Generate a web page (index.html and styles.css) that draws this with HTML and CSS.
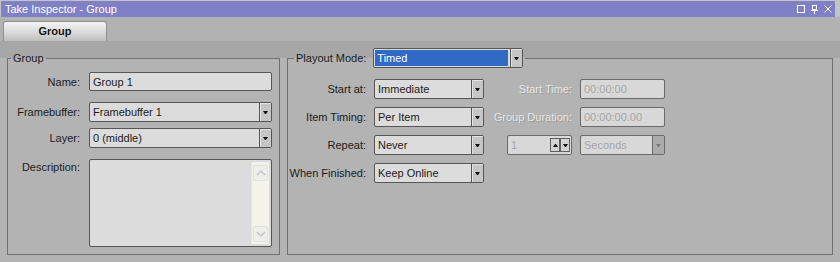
FILE: index.html
```html
<!DOCTYPE html>
<html lang="en">
<head>
    <meta charset="UTF-8">
    <meta name="viewport" content="width=device-width, initial-scale=1.0">
    <title>Take Inspector - Group</title>
    <link rel="stylesheet" href="styles.css">
</head>
<body>

    <div class="window">
        <div class="titlebar">
            <span class="title">Take Inspector - Group</span>
            <div class="title-buttons">
                <svg width="8" height="8" viewBox="0 0 8 8"><rect x="0.5" y="0.5" width="7" height="7" fill="none" stroke="#fff"/></svg>
                <svg width="7" height="9" viewBox="0 0 7 9"><rect x="1.5" y="0.5" width="4" height="4" fill="none" stroke="#fff"/><line x1="0" y1="5.5" x2="7" y2="5.5" stroke="#fff"/><line x1="3.5" y1="5" x2="3.5" y2="9" stroke="#fff"/></svg>
                <svg width="8" height="8" viewBox="0 0 8 8"><path d="M0.5 0.5 L7.5 7.5 M7.5 0.5 L0.5 7.5" stroke="#fff" stroke-width="1" fill="none"/></svg>
            </div>
        </div>

        <div class="tabstrip">
            <div class="tab">Group</div>
        </div>

        <div class="content">
            <!-- left: group properties -->
            <fieldset class="box group-box">
                <legend class="legend-group">Group</legend>
                <div class="group-form">
                    <div class="row row-name">
                        <span class="lbl">Name:</span>
                        <div class="field">Group 1</div>
                    </div>
                    <div class="row row-fb">
                        <span class="lbl">Framebuffer:</span>
                        <div class="combo"><span class="value">Framebuffer 1</span><span class="drop"></span></div>
                    </div>
                    <div class="row row-layer">
                        <span class="lbl">Layer:</span>
                        <div class="combo"><span class="value">0 (middle)</span><span class="drop"></span></div>
                    </div>
                    <div class="row row-desc">
                        <span class="lbl lbl-top">Description:</span>
                        <div class="memo">
                            <div class="scrollbar">
                                <span class="sbtn"><svg width="10" height="6" viewBox="0 0 10 6"><polyline points="1,5 5,1 9,5" fill="none" stroke="#c4c4c4" stroke-width="1.5"/></svg></span>
                                <span class="sbtn"><svg width="10" height="6" viewBox="0 0 10 6"><polyline points="1,1 5,5 9,1" fill="none" stroke="#c4c4c4" stroke-width="1.5"/></svg></span>
                            </div>
                        </div>
                    </div>
                </div>
            </fieldset>

            <!-- right: playout settings -->
            <fieldset class="box playout-box">
                <legend class="legend-playout">
                    <span>Playout Mode:</span>
                    <div class="combo combo-timed"><span class="value"><span class="selected">Timed</span></span><span class="drop"></span></div>
                </legend>
                <div class="playout-grid">
                    <span class="lbl">Start at:</span>
                    <div class="combo"><span class="value">Immediate</span><span class="drop"></span></div>
                    <span class="lbl disabled">Start Time:</span>
                    <div class="field is-disabled">00:00:00</div>

                    <span class="lbl">Item Timing:</span>
                    <div class="combo"><span class="value">Per Item</span><span class="drop"></span></div>
                    <span class="lbl disabled">Group Duration:</span>
                    <div class="field is-disabled">00:00:00.00</div>

                    <span class="lbl">Repeat:</span>
                    <div class="combo"><span class="value">Never</span><span class="drop"></span></div>
                    <div class="spin">
                        <span class="value">1</span>
                        <span class="spin-btn up"></span>
                        <span class="spin-btn down"></span>
                    </div>
                    <div class="combo is-disabled"><span class="value">Seconds</span><span class="drop"></span></div>

                    <span class="lbl">When Finished:</span>
                    <div class="combo"><span class="value">Keep Online</span><span class="drop"></span></div>
                </div>
            </fieldset>
        </div>
    </div>

</body>
</html>
```

FILE: styles.css
```css
body {
    margin: 0;
    background-color: #c4c4c4;
    font-family: "Liberation Sans", Arial, sans-serif;
    font-size: 11px;
    color: #1b1b1b;
}

.window {
    width: 840px;
    height: 262px;
    display: flex;
    flex-direction: column;
    overflow: hidden;
}

/* title bar */
.titlebar {
    height: 16px;
    margin: 1px 5px 0 1px;
    padding: 0 3px 0 4px;
    background-color: #7f80c5;
    color: #ffffff;
    display: flex;
    align-items: center;
    justify-content: space-between;
}

.title {
    font-size: 11px;
    line-height: 16px;
}

.title-buttons {
    display: flex;
    align-items: center;
    gap: 6px;
}

.title-buttons svg {
    display: block;
}

/* tabs */
.tabstrip {
    height: 24px;
    background-color: #b2b2b2;
    display: flex;
    align-items: flex-end;
    padding-left: 3px;
    box-sizing: border-box;
}

.tab {
    width: 104px;
    height: 20px;
    box-sizing: border-box;
    border: 1px solid #8f8f8f;
    border-bottom: none;
    border-radius: 3px 3px 0 0;
    background: linear-gradient(to bottom, #f4f4f4, #dadada 55%, #bebebe);
    font-weight: bold;
    text-align: center;
    line-height: 19px;
    color: #141414;
}

/* main area */
.content {
    flex: 1;
    display: flex;
    gap: 7px;
    padding: 7px 7px 7px 7px;
    background: linear-gradient(to bottom, #a7a7a7 0, #a7a7a7 17px, #b3b3b3 17px);
}

.box {
    margin: 0;
    padding: 0;
    border: 1px solid #707070;
    min-width: 0;
    box-sizing: border-box;
}

.group-box {
    width: 273px;
}

.playout-box {
    width: 546px;
}

legend {
    height: 20px;
    display: flex;
    align-items: center;
    box-sizing: border-box;
}

.legend-group {
    margin-left: 3px;
    padding: 0 2px 0 2px;
}

.legend-playout {
    margin-left: 6px;
    padding: 0 2px;
    gap: 7px;
}

/* left form */
.group-form {
    padding: 4px 7px 7px 0;
}

.row {
    display: flex;
    align-items: center;
    gap: 9px;
}

.row .lbl {
    width: 72px;
    flex-shrink: 0;
}

.row-name {
    height: 19px;
}

.row-fb {
    height: 20px;
    margin-top: 11px;
}

.row-layer {
    height: 20px;
    margin-top: 6px;
}

.row-desc {
    height: 88px;
    margin-top: 11px;
    align-items: flex-start;
}

.lbl {
    display: flex;
    align-items: center;
    justify-content: flex-end;
    white-space: nowrap;
}

.lbl-top {
    padding-top: 2px;
    line-height: 13px;
}

.lbl.disabled {
    color: #e6e6e6;
    text-shadow: 1px 1px 0 rgba(110, 110, 110, 0.35);
}

.field,
.combo,
.spin {
    height: 100%;
    box-sizing: border-box;
    border: 1px solid #565656;
    border-radius: 2px;
    background-color: #dcdcdc;
}

.field {
    flex: 1;
    display: flex;
    align-items: center;
    padding-left: 3px;
}

.field.is-disabled {
    color: #a6a6a6;
    border-color: #6a6a6a;
    background-color: #d8d8d8;
}

.combo {
    flex: 1;
    display: flex;
    overflow: hidden;
}

.combo .value {
    flex: 1;
    display: flex;
    align-items: center;
    padding-left: 3px;
    white-space: nowrap;
}

.combo .drop {
    width: 11px;
    border-left: 1px solid #565656;
    background-color: #c6c6c6;
    box-shadow: inset 1px 1px 0 #e2e2e2;
    display: flex;
    align-items: center;
    justify-content: center;
}

.combo .drop::after {
    content: "";
    width: 1px;
    border-left: 2px solid transparent;
    border-right: 2px solid transparent;
    border-top: 3px solid #111111;
}

.combo.is-disabled {
    color: #a6a6a6;
    border-color: #6a6a6a;
    background-color: #d8d8d8;
}

.combo.is-disabled .drop {
    border-left-color: #6a6a6a;
    background-color: #ababab;
    box-shadow: none;
}

.combo.is-disabled .drop::after {
    border-top-color: #7c7c7c;
}

.combo-timed {
    width: 150px;
    height: 20px;
    flex: none;
}

.combo-timed .value {
    padding: 1px 2px 1px 1px;
}

.combo-timed .selected {
    flex: 1;
    height: 100%;
    display: flex;
    align-items: center;
    padding-left: 2px;
    background-color: #316ac5;
    color: #ffffff;
}

/* description memo */
.memo {
    flex: 1;
    height: 88px;
    box-sizing: border-box;
    border: 1px solid #565656;
    border-radius: 2px;
    background-color: #dcdcdc;
    display: flex;
    justify-content: flex-end;
    padding: 2px 2px 2px 0;
}

.scrollbar {
    width: 18px;
    background-color: #f3f3ec;
    border-left: 1px solid #e6e6e0;
    display: flex;
    flex-direction: column;
    justify-content: space-between;
    padding: 3px 1px 2px 1px;
    box-sizing: border-box;
}

.sbtn {
    height: 14px;
    border: 1px solid #e2e2dc;
    border-radius: 2px;
    background-color: #efefea;
    display: flex;
    align-items: center;
    justify-content: center;
}

.sbtn svg {
    display: block;
}

/* playout grid */
.playout-grid {
    display: grid;
    grid-template-columns: 78px 110px 80px 85px;
    grid-auto-rows: 20px;
    column-gap: 8px;
    row-gap: 8px;
    padding-top: 11px;
}

.spin {
    width: 65px;
    justify-self: end;
    display: flex;
    align-items: center;
    padding: 0 1px 0 3px;
    border-color: #6a6a6a;
    background-color: #d8d8d8;
}

.spin .value {
    flex: 1;
    color: #a6a6a6;
}

.spin-btn {
    width: 10px;
    height: 14px;
    box-sizing: border-box;
    border: 1px solid #606060;
    background-color: #d4d4d4;
    display: flex;
    align-items: center;
    justify-content: center;
}

.spin-btn.up::after,
.spin-btn.down::after {
    content: "";
    width: 1px;
    border-left: 2px solid transparent;
    border-right: 2px solid transparent;
}

.spin-btn.up::after {
    border-bottom: 3px solid #111111;
}

.spin-btn.down::after {
    border-top: 3px solid #111111;
}
```
